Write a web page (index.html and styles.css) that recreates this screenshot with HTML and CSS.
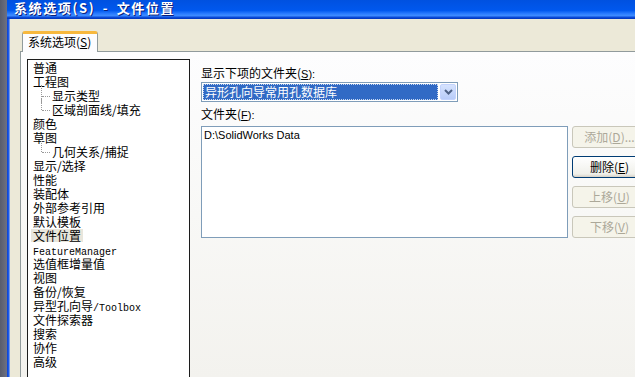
FILE: index.html
```html
<!DOCTYPE html>
<html lang="zh-CN">
<head>
<meta charset="utf-8">
<title>系统选项(S) - 文件位置</title>
<link rel="stylesheet" href="styles.css">
</head>
<body>
<div class="screen">
  <div class="desk"></div>
  <div class="frame"></div>
  <div class="win">
    <div class="titlebar"><span class="title">系统选项(S) - 文件位置</span></div>
    <div class="client">
      <div class="tabs">
        <div class="tab">系统选项(<u>S</u>)</div>
      </div>
      <div class="panel">
        <div class="tree">
          <div class="item">普通</div>
          <div class="item">工程图</div>
          <div class="item child">显示类型</div>
          <div class="item child last">区域剖面线/填充</div>
          <div class="item">颜色</div>
          <div class="item">草图</div>
          <div class="item child last">几何关系/捕捉</div>
          <div class="item">显示/选择</div>
          <div class="item">性能</div>
          <div class="item">装配体</div>
          <div class="item">外部参考引用</div>
          <div class="item">默认模板</div>
          <div class="item"><span class="sel">文件位置</span></div>
          <div class="item"><span class="mono">FeatureManager</span></div>
          <div class="item">选值框增量值</div>
          <div class="item">视图</div>
          <div class="item">备份/恢复</div>
          <div class="item">异型孔向导<span class="mono">/Toolbox</span></div>
          <div class="item">文件探索器</div>
          <div class="item">搜索</div>
          <div class="item">协作</div>
          <div class="item">高级</div>
        </div>
        <div class="right">
          <div class="label">显示下项的文件夹(<u class="lat">S</u><span class="lat">):</span></div>
          <div class="combo">
            <div class="combo-text"><span class="focus">异形孔向导常用孔数据库</span></div>
            <div class="combo-btn">
              <svg width="9" height="6" viewBox="0 0 9 6"><path d="M1 1 L4.5 4.5 L8 1" fill="none" stroke="#4d6185" stroke-width="2"/></svg>
            </div>
          </div>
          <div class="label label2">文件夹(<u class="lat">F</u><span class="lat">):</span></div>
          <div class="row">
            <div class="listbox"><div class="entry">D:\SolidWorks Data</div></div>
            <div class="buttons">
              <div class="btn disabled">添加(<u>D</u>)...</div>
              <div class="btn active">删除(<u>E</u>)</div>
              <div class="btn disabled">上移(<u>U</u>)</div>
              <div class="btn disabled">下移(<u>V</u>)</div>
            </div>
          </div>
        </div>
      </div>
    </div>
  </div>
</div>
</body>
</html>
```
FILE: styles.css
```css
html, body {
  margin: 0;
  padding: 0;
  overflow: hidden;
}
body {
  width: 635px;
  height: 377px;
  font-family: "Noto Sans CJK SC", "Liberation Sans", sans-serif;
  font-size: 12px;
  color: #000;
}
u { text-decoration: underline; }
.screen {
  display: flex;
  width: 635px;
  height: 377px;
  overflow: hidden;
}
.desk {
  width: 7px;
  flex: none;
  background: linear-gradient(to right, #585c6c, #6e7182);
}
.frame {
  width: 3px;
  flex: none;
  background: linear-gradient(to right, #0a3fd0, #1c5ae8, #9fb7e6);
}
.win {
  flex: 1;
  display: flex;
  flex-direction: column;
  min-width: 0;
}
.titlebar {
  height: 19px;
  flex: none;
  background: linear-gradient(to bottom, #0051e0 0%, #0058ee 55%, #2a7cff 72%, #3d8bff 82%, #0a49d6 92%, #0033b8 100%);
  margin-left: -3px;
  padding-left: 7px;
  overflow: hidden;
}
.title {
  display: block;
  color: #fff;
  font-weight: bold;
  font-size: 13px;
  line-height: 16px;
  letter-spacing: 1.6px;
  word-spacing: 3px;
  white-space: nowrap;
  text-shadow: 1px 1px 0 #0a1f7a;
}
.client {
  flex: 1;
  background: #ece9d8;
  padding: 12px 0 0 10px;
  display: flex;
  flex-direction: column;
  min-height: 0;
}
.tabs {
  height: 20px;
  display: flex;
  padding-left: 2px;
  position: relative;
  z-index: 1;
}
.tab {
  width: 76px;
  height: 21px;
  box-sizing: border-box;
  border: 1px solid #919b9c;
  border-top: 3px solid #f7b83d;
  border-bottom: none;
  border-radius: 3px 3px 0 0;
  background: #fcfcfe;
  line-height: 16px;
  padding-left: 5px;
  white-space: nowrap;
}
.panel {
  flex: 1;
  border-top: 1px solid #919b9c;
  border-left: 1px solid #919b9c;
  background: linear-gradient(to bottom, #fdfdfe 0%, #f8f8f6 50%, #f3f2ee 100%);
  display: flex;
  padding: 7px 0 0 6px;
  min-height: 0;
  overflow: hidden;
}
.tree {
  width: 163px;
  flex: none;
  height: 340px;
  border: 1px solid #1c1c1c;
  background: #fff;
  padding-top: 1px;
  box-sizing: border-box;
}
.item {
  height: 14px;
  line-height: 14px;
  padding-left: 5px;
  white-space: nowrap;
  position: relative;
}
.item.child {
  padding-left: 24px;
}
.item.child::before {
  content: "";
  position: absolute;
  left: 13px;
  top: -4px;
  height: 18px;
  border-left: 1px dotted #9a9a9a;
}
.item.child.last::before {
  height: 11px;
}
.item.child::after {
  content: "";
  position: absolute;
  left: 14px;
  top: 7px;
  width: 8px;
  border-top: 1px dotted #9a9a9a;
}
.sel {
  display: inline-block;
  background: #e8e6dc;
  margin-left: -2px;
  padding: 0 2px;
  line-height: 13px;
}
.mono {
  font-family: "Liberation Mono", monospace;
  font-size: 10px;
}
.lat {
  font-family: "Liberation Sans", sans-serif;
  font-size: 11px;
}
.right {
  margin-left: 11px;
  padding-top: 7px;
  display: flex;
  flex-direction: column;
}
.label {
  height: 14px;
  line-height: 14px;
  white-space: nowrap;
}
.combo {
  margin-top: 2px;
  width: 257px;
  height: 20px;
  box-sizing: border-box;
  border: 1px solid #7f9db9;
  background: #fff;
  display: flex;
  align-items: center;
  padding: 0 1px 0 1px;
}
.combo-text {
  flex: 1;
  height: 16px;
  background: #316ac5;
  margin-right: 2px;
}
.focus {
  display: block;
  height: 16px;
  box-sizing: border-box;
  border: 1px dotted #c8d8f0;
  color: #fff;
  line-height: 14px;
  padding-left: 1px;
  white-space: nowrap;
}
.combo-btn {
  width: 16px;
  height: 16px;
  box-sizing: border-box;
  border: 1px solid #c3d3fd;
  border-radius: 2px;
  background: linear-gradient(to bottom, #d6e3fe, #b8ccf9);
  display: flex;
  align-items: center;
  justify-content: center;
}
.label2 {
  margin-top: 5px;
}
.row {
  margin-top: 5px;
  display: flex;
  gap: 4px;
}
.listbox {
  width: 367px;
  height: 112px;
  box-sizing: border-box;
  border: 1px solid #7f9db9;
  background: #fff;
  padding: 2px 0 0 2px;
}
.entry {
  font-family: "Liberation Sans", sans-serif;
  font-size: 11px;
  line-height: 13px;
}
.buttons {
  display: flex;
  flex-direction: column;
  gap: 8px;
}
.btn {
  width: 75px;
  height: 22px;
  box-sizing: border-box;
  border-radius: 3px;
  text-align: center;
  line-height: 20px;
  white-space: nowrap;
}
.btn.disabled {
  border: 1px solid #c9c7ba;
  background: #f5f4ea;
  color: #aca899;
}
.btn.active {
  border: 1px solid #003c74;
  background: linear-gradient(to bottom, #ffffff, #f0f0ea 85%, #d6d0c5);
  color: #000;
}
```
